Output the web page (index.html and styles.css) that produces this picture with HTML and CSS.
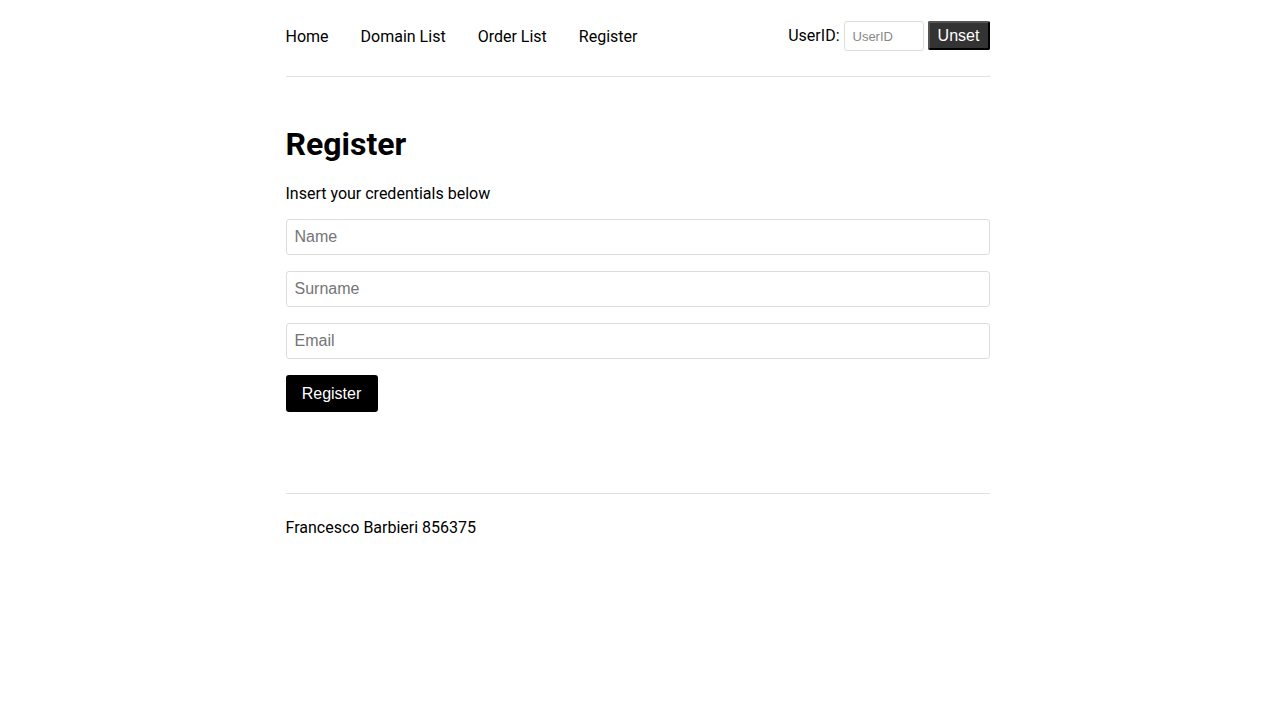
FILE: index.html
```html
<!DOCTYPE html>
<html>
<head>
<meta charset="utf-8">
<link rel="stylesheet" href="styles.css">
</head>
<body>
<div class="page">
  <header class="header">
    <nav class="nav">
      <a href="#">Home</a>
      <a href="#">Domain List</a>
      <a href="#">Order List</a>
      <a href="#">Register</a>
    </nav>
    <div class="user">
      <span class="user-label">UserID:</span>
      <input class="user-input" type="text" placeholder="UserID">
      <button class="unset-btn">Unset</button>
    </div>
  </header>
  <main class="main">
    <h1 class="title">Register</h1>
    <p class="subtitle">Insert your credentials below</p>
    <form class="form">
      <input class="field" type="text" placeholder="Name">
      <input class="field" type="text" placeholder="Surname">
      <input class="field" type="text" placeholder="Email">
      <div><button class="submit" type="button">Register</button></div>
    </form>
  </main>
  <footer class="footer">Francesco Barbieri 856375</footer>
</div>
</body>
</html>
```
FILE: styles.css
```css
html, body {
  margin: 0;
  padding: 0;
  background: #fff;
}
body {
  font-family: Roboto, "Liberation Sans", sans-serif;
  font-size: 16px;
  color: #000;
}
.page {
  width: 704px;
  margin: 0 auto;
}
.header {
  display: flex;
  justify-content: space-between;
  align-items: flex-start;
  height: 76px;
  border-bottom: 1px solid #e0e0e0;
  box-sizing: content-box;
}
.nav {
  display: flex;
  gap: 32px;
  padding-top: 27px;
  line-height: 20px;
}
.nav a {
  color: #000;
  text-decoration: none;
}
.user {
  display: flex;
  align-items: flex-start;
  gap: 4px;
  padding-top: 21px;
}
.user-label {
  line-height: 30px;
  margin-top: 0;
}
.user-input {
  width: 80px;
  height: 30px;
  box-sizing: border-box;
  border: 1px solid #ddd;
  border-radius: 3px;
  padding: 0 8px;
  font-family: "Liberation Sans", Arial, sans-serif;
  font-size: 13px;
}
.user-input::placeholder { color: #888; }
.unset-btn {
  height: 29px;
  width: 62px;
  box-sizing: border-box;
  background: #333;
  color: #fff;
  border: 2px solid #000;
  border-top-color: #555;
  border-left-color: #555;
  border-radius: 2px;
  font-family: "Liberation Sans", Arial, sans-serif;
  font-size: 16px;
  padding: 0;
}
.main {
  padding-top: 48px;
  padding-bottom: 81px;
  border-bottom: 1px solid #e0e0e0;
}
.title {
  margin: 0;
  font-size: 32px;
  line-height: 38px;
  font-weight: 700;
}
.subtitle {
  margin: 19px 0 13px;
  line-height: 24px;
}
.form {
  display: flex;
  flex-direction: column;
  gap: 16px;
  margin: 0;
}
.field {
  height: 36px;
  box-sizing: border-box;
  border: 1px solid #ddd;
  border-radius: 3px;
  padding: 0 8px;
  font-family: "Liberation Sans", Arial, sans-serif;
  font-size: 16px;
  width: 100%;
}
.field::placeholder { color: #757575; }
.submit {
  height: 37px;
  width: 92px;
  background: #000;
  color: #fff;
  border: none;
  border-radius: 3px;
  font-family: "Liberation Sans", Arial, sans-serif;
  font-size: 16px;
  padding: 0;
}
.footer {
  padding-top: 22px;
  line-height: 24px;
}
```
